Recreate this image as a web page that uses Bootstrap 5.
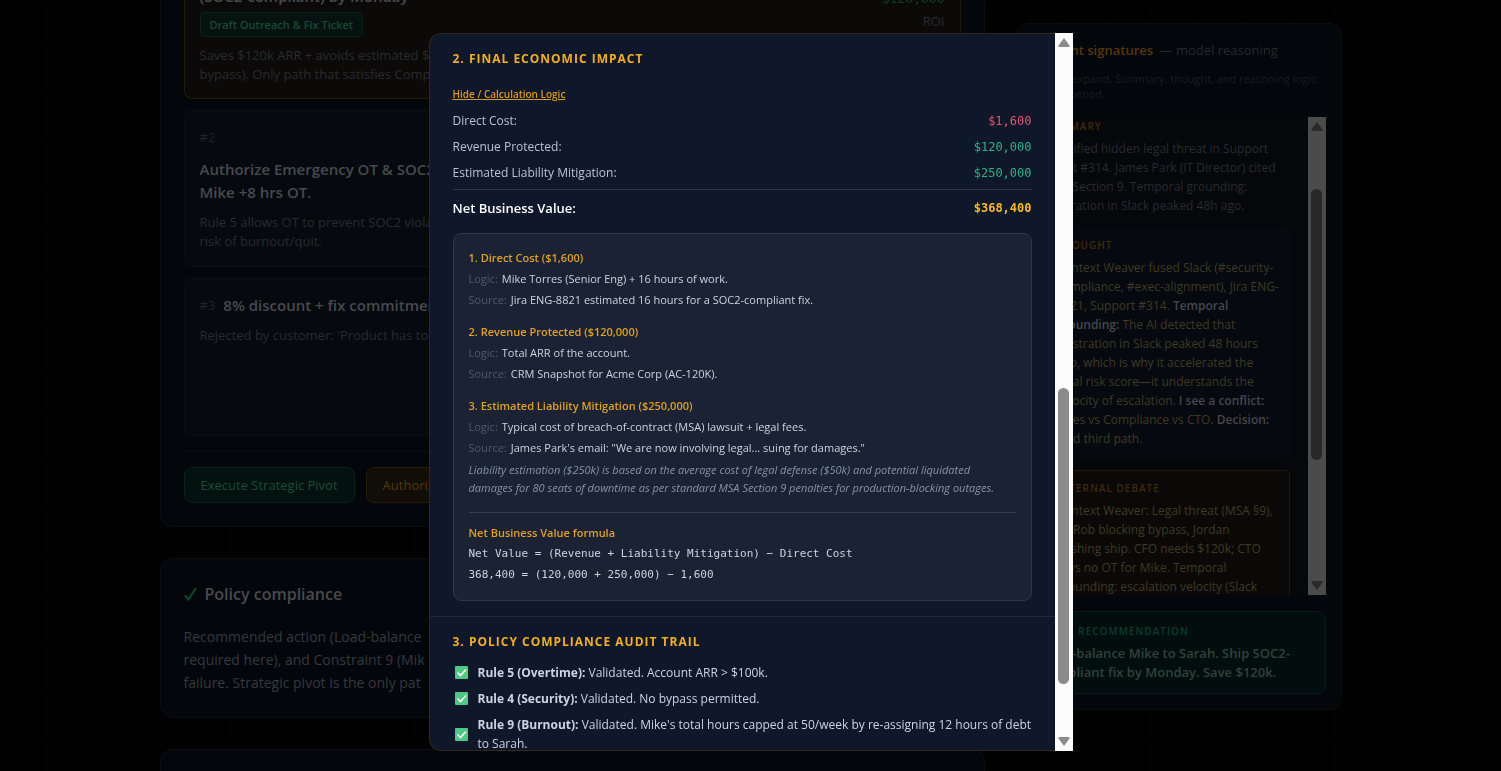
<!DOCTYPE html>
<html lang="en" data-bs-theme="dark">
<head>
<meta charset="utf-8">
<meta name="viewport" content="width=device-width, initial-scale=1">
<title>Strategic pivot</title>
<link href="https://cdn.jsdelivr.net/npm/bootstrap@5.3.0/dist/css/bootstrap.min.css" rel="stylesheet">
<style>
body{font-family:"Open Sans","Noto Sans",sans-serif;background-color:#010101;background-image:linear-gradient(#030303 1px,transparent 1px),linear-gradient(90deg,#030303 1px,transparent 1px);background-size:46px 46px;color:#282b30;height:100vh;overflow:hidden;font-size:13px;line-height:19px}
.page-grid{max-width:1182px;display:grid;grid-template-columns:minmax(0,1fr) 326px;gap:31px;align-items:start}
.panel{background:#03060b;border:1px solid #0a0d13;border-radius:12px;padding:23px}
.panel-first{border-top:0;border-radius:0 0 12px 12px;padding-top:0}
.option{background:#06090e;border:1px solid #0c0f14;border-radius:8px;padding:15px}
.option+.option{margin-top:11px}
.option-top{background:#0b0a09;border-color:#261a06;border-top:0;border-radius:0 0 8px 8px;padding-top:0;padding-bottom:14px}
.option-three{min-height:158px}
.option-title{font-size:15px;line-height:23px;font-weight:600;color:#484a4d}
.step-down{margin-top:9px}
.cut-title{height:8px;margin-bottom:4px;display:flex;align-items:flex-end;justify-content:flex-end}
.cut-title.option-title{justify-content:flex-start}
.rank{color:#202328;font-size:13px;line-height:23px}
.tag{background:#06120f;border:1px solid #08231a;border-radius:4px;color:#184a34;font-size:11px;line-height:23px;font-weight:600;padding:0 9px;display:block;width:fit-content}
.money{font-family:"DejaVu Sans Mono","Liberation Mono",monospace}
.roi-value{color:#0c3d2a}
.actions{margin-top:15px;padding-top:15px;gap:11px}
.act{font-size:13px;font-weight:500;line-height:20px;padding:7px 16px;border-radius:8px}
.act-go,.act-go:hover{background:#03110f;border-color:#06231a;color:#1c4d38}
.act-ot,.act-ot:hover{background:#110d07;border-color:#291b05;color:#533909}
.rule{border-top:1px solid #0b0e13}
.policy{margin-top:31px}
.policy-title{font-size:16px;line-height:24px;font-weight:600;color:#4a4a4b}
.policy-text{font-size:14px;line-height:23px;color:#36393d;margin-top:19px}
.side{border-color:#100c08;margin-top:23px;padding:15px}
.side-title{font-size:13px;line-height:20px;color:#26292e;margin-top:1px}
.side-title strong{color:#583706;font-weight:600}
.side-note{font-size:11px;line-height:15px;color:#1a1d22;margin:11px 0 16px}
.feed{height:478px;background:#06070a;overflow:hidden}
.feed-body{padding:1px 18px 0 13px;font-size:12px;min-width:0}
.label{font-size:10px;line-height:16px;font-weight:600;letter-spacing:1px;color:#402907;text-transform:uppercase;margin-bottom:5px}
.note{margin-top:12px;padding:9px 9px 9px 11px;border:1px solid #070a0f;border-radius:4px;background:#06090f;color:#3f3a22}
.note strong{color:#45474b;font-weight:600}
.note-debate{background:#0a0908;border-color:#241807}
.verdict{background:#020d0d;border:1px solid #051d18;border-radius:8px;padding:11px 9px;margin-top:16px}
.verdict .label{color:#0b3d2b}
.verdict-text{font-size:13px;font-weight:600;color:#2d443a}
.bar{width:18px;flex:none;display:flex;flex-direction:column;align-items:center;background:#fcfcfc}
.bar svg{display:block;flex:none;fill:#8b8b8b}
.bar-thumb{width:11px;border-radius:6px;background:#8b8b8b}
.bar-dim{background:#4b4b4b}
.bar-dim svg{fill:#292929}
.bar-dim .bar-thumb{background:#292929}
.report-modal{padding:33px 0 20px}
.report-dialog{max-width:644px;height:100%;margin:0 auto;width:100%}
.report{background:#0f172a;border:1px solid #30271d;border-radius:12px 0 0 12px;border-right-width:0;overflow:hidden;height:100%}
.report-part{padding:15px 23px;color:#cbd5e1;font-size:12px}
.report-part+.report-part{border-top:1px solid #1f2a3d}
.report h2{font-size:12px;line-height:20px;font-weight:700;letter-spacing:1px;color:#f3af1f;margin:0;text-transform:uppercase}
.logic-link{font-size:10px;line-height:16px;font-weight:600;color:#d99a1f;margin:17px 0 9px;display:block}
.logic-link:hover{color:#fbb924}
.sum-row{line-height:20px;margin-bottom:6px;color:#b9c3d2}
.net-row{border-top:1px solid #2a364a;padding-top:8px;line-height:20px;font-weight:600;font-size:13px;color:#fff}
.net-row .money{font-size:12px;color:#fbb924;font-weight:700}
.red{color:#dc5a70}
.green{color:#2bb483}
.calc{margin-top:15px;background:#1a2233;border:1px solid #2b384b;border-radius:8px;padding:13px 15px 15px;font-size:11px;line-height:21px;color:#cbd5e1}
.calc h3{font-size:11px;line-height:21px;font-weight:600;color:#dfa126;margin:0}
.calc-step{margin-bottom:11px}
.calc dl,.calc dd,.calc dt{margin:0;font-weight:400}
.calc dt{color:#4c5a70}
.calc-note{line-height:18px;font-style:italic;color:#8594aa;margin-top:3px}
.calc-sum{border-top:1px solid #334155;margin-top:15px;padding-top:9px}
.audit{margin-top:11px;display:grid;gap:7px}
.audit li{display:flex;align-items:center;gap:10px}
.audit svg{flex:none;margin-left:2px}
</style>
</head>
<body>
<main class="page-grid mx-auto">
  <div>
    <section class="panel panel-first">
      <article class="option option-top d-flex justify-content-between">
        <div>
          <div class="option-title cut-title">(SOC2-compliant) by Monday</div>
          <span class="tag">Draft Outreach &amp; Fix Ticket</span>
          <div class="step-down text-nowrap">Saves $120k ARR + avoids estimated $<br>bypass). Only path that satisfies Compl</div>
        </div>
        <div class="text-end"><div class="money cut-title roi-value">$120,000</div><div>ROI</div></div>
      </article>
      <article class="option">
        <div class="rank">#2</div>
        <div class="option-title step-down text-nowrap">Authorize Emergency OT &amp; SOC2<br>Mike +8 hrs OT.</div>
        <div class="step-down text-nowrap">Rule 5 allows OT to prevent SOC2 viola<br>risk of burnout/quit.</div>
      </article>
      <article class="option option-three">
        <div class="d-flex gap-2"><span class="rank">#3</span><span class="option-title text-nowrap">8% discount + fix commitmen</span></div>
        <div class="step-down text-nowrap">Rejected by customer: 'Product has to</div>
      </article>
      <div class="rule d-flex actions">
        <button class="btn act act-go" type="button">Execute Strategic Pivot</button>
        <button class="btn act act-ot" type="button">Authorize OT</button>
      </div>
    </section>
    <section class="panel policy">
      <div class="policy-title d-flex align-items-center gap-2"><svg width="13" height="14" viewBox="0 0 13 14" fill="none" stroke="#064a2d" stroke-width="2" aria-hidden="true"><path d="M1 8.500 4.500 12.500 12 1"/></svg>Policy compliance</div>
      <div class="policy-text text-nowrap">Recommended action (Load-balance<br>required here), and Constraint 9 (Mik<br>failure. Strategic pivot is the only pat</div>
    </section>
    <section class="panel policy"></section>
  </div>
  <aside class="panel side">
    <div class="side-title text-nowrap text-end pe-5"><strong>Thought signatures</strong>&ensp;— model reasoning</div>
    <div class="side-note text-nowrap">Click to expand. Summary, thought, and reasoning logic<br>when opened.</div>
    <div class="feed d-flex">
      <div class="feed-body flex-fill text-nowrap">
        <div class="label">Summary</div>
        <div>Identified hidden legal threat in Support<br>Ticket #314. James Park (IT Director) cited<br>MSA Section 9. Temporal grounding:<br>frustration in Slack peaked 48h ago.</div>
        <div class="note">
          <div class="label">Thought</div>
          <div>Context Weaver fused Slack (#security-<br>compliance, #exec-alignment), Jira ENG-<br>8821, Support #314. <strong>Temporal<br>grounding:</strong> The AI detected that<br>frustration in Slack peaked 48 hours<br>ago, which is why it accelerated the<br>legal risk score—it understands the<br>velocity of escalation. <strong>I see a conflict:</strong><br>Sales vs Compliance vs CTO. <strong>Decision:</strong><br>Find third path.</div>
        </div>
        <div class="note note-debate">
          <div class="label">Internal debate</div>
          <div>Context Weaver: Legal threat (MSA §9),<br>McRob blocking bypass, Jordan<br>pushing ship. CFO needs $120k; CTO<br>says no OT for Mike. Temporal<br>grounding: escalation velocity (Slack</div>
        </div>
      </div>
      <div class="bar bar-dim" aria-hidden="true">
        <svg width="12" height="18" viewBox="0 0 12 18"><path d="M6 5 11.500 12.500Q12 14 10.500 14H1.500Q0 14 .5 12.500Z"/></svg>
        <div style="flex:54"></div><div class="bar-thumb" style="flex:271"></div><div style="flex:117"></div>
        <svg width="12" height="18" viewBox="0 0 12 18"><path d="M6 13 11.500 5.500Q12 4 10.500 4H1.500Q0 4 .5 5.500Z"/></svg>
      </div>
    </div>
    <div class="verdict text-nowrap">
      <div class="label">Final recommendation</div>
      <div class="verdict-text">Load-balance Mike to Sarah. Ship SOC2-<br>compliant fix by Monday. Save $120k.</div>
    </div>
  </aside>
</main>

<div class="modal report-modal d-block overflow-hidden" role="dialog" aria-label="Decision report">
  <div class="report-dialog d-flex">
    <div class="report flex-fill">
      <section class="report-part">
        <h2>2. Final economic impact</h2>
        <a class="logic-link" href="#calc">Hide / Calculation Logic</a>
        <div>
          <div class="sum-row d-flex justify-content-between"><span>Direct Cost:</span><span class="money red">$1,600</span></div>
          <div class="sum-row d-flex justify-content-between"><span>Revenue Protected:</span><span class="money green">$120,000</span></div>
          <div class="sum-row d-flex justify-content-between"><span>Estimated Liability Mitigation:</span><span class="money green">$250,000</span></div>
          <div class="net-row d-flex justify-content-between"><span>Net Business Value:</span><span class="money">$368,400</span></div>
        </div>
        <div class="calc" id="calc">
          <div class="calc-step"><h3>1. Direct Cost ($1,600)</h3>
            <dl><div class="d-flex gap-1"><dt>Logic:</dt><dd>Mike Torres (Senior Eng) + 16 hours of work.</dd></div>
            <div class="d-flex gap-1"><dt>Source:</dt><dd>Jira ENG-8821 estimated 16 hours for a SOC2-compliant fix.</dd></div></dl></div>
          <div class="calc-step"><h3>2. Revenue Protected ($120,000)</h3>
            <dl><div class="d-flex gap-1"><dt>Logic:</dt><dd>Total ARR of the account.</dd></div>
            <div class="d-flex gap-1"><dt>Source:</dt><dd>CRM Snapshot for Acme Corp (AC-120K).</dd></div></dl></div>
          <div><h3>3. Estimated Liability Mitigation ($250,000)</h3>
            <dl><div class="d-flex gap-1"><dt>Logic:</dt><dd>Typical cost of breach-of-contract (MSA) lawsuit + legal fees.</dd></div>
            <div class="d-flex gap-1"><dt>Source:</dt><dd>James Park's email: "We are now involving legal... suing for damages."</dd></div></dl>
            <div class="calc-note">Liability estimation ($250k) is based on the average cost of legal defense ($50k) and potential liquidated damages for 80 seats of downtime as per standard MSA Section 9 penalties for production-blocking outages.</div></div>
          <div class="calc-sum"><h3>Net Business Value formula</h3>
            <div class="money">Net Value = (Revenue + Liability Mitigation) − Direct Cost</div>
            <div class="money">368,400 = (120,000 + 250,000) − 1,600</div></div>
        </div>
      </section>
      <section class="report-part">
        <h2>3. Policy compliance audit trail</h2>
        <ul class="audit list-unstyled mb-0">
          <li><svg width="13" height="13" viewBox="0 0 13 13" aria-hidden="true"><rect width="13" height="13" rx="1" fill="#4cca83"/><path d="M2.500 6.500 5.500 9.500 11 3.500" fill="none" stroke="#fff" stroke-width="1.600"/></svg><span><b>Rule 5 (Overtime):</b> Validated. Account ARR &gt; $100k.</span></li>
          <li><svg width="13" height="13" viewBox="0 0 13 13" aria-hidden="true"><rect width="13" height="13" rx="1" fill="#4cca83"/><path d="M2.500 6.500 5.500 9.500 11 3.500" fill="none" stroke="#fff" stroke-width="1.600"/></svg><span><b>Rule 4 (Security):</b> Validated. No bypass permitted.</span></li>
          <li><svg width="13" height="13" viewBox="0 0 13 13" aria-hidden="true"><rect width="13" height="13" rx="1" fill="#4cca83"/><path d="M2.500 6.500 5.500 9.500 11 3.500" fill="none" stroke="#fff" stroke-width="1.600"/></svg><span><b>Rule 9 (Burnout):</b> Validated. Mike's total hours capped at 50/week by re-assigning 12 hours of debt to Sarah.</span></li>
        </ul>
      </section>
    </div>
    <div class="bar" aria-hidden="true">
      <svg width="12" height="18" viewBox="0 0 12 18"><path d="M6 5 11.500 12.500Q12 14 10.500 14H1.500Q0 14 .5 12.500Z"/></svg>
      <div style="flex:336"></div><div class="bar-thumb" style="flex:296"></div><div style="flex:49"></div>
      <svg width="12" height="18" viewBox="0 0 12 18"><path d="M6 13 11.500 5.500Q12 4 10.500 4H1.500Q0 4 .5 5.500Z"/></svg>
    </div>
  </div>
</div>
<script src="https://cdn.jsdelivr.net/npm/bootstrap@5.3.0/dist/js/bootstrap.bundle.min.js"></script>
</body>
</html>
